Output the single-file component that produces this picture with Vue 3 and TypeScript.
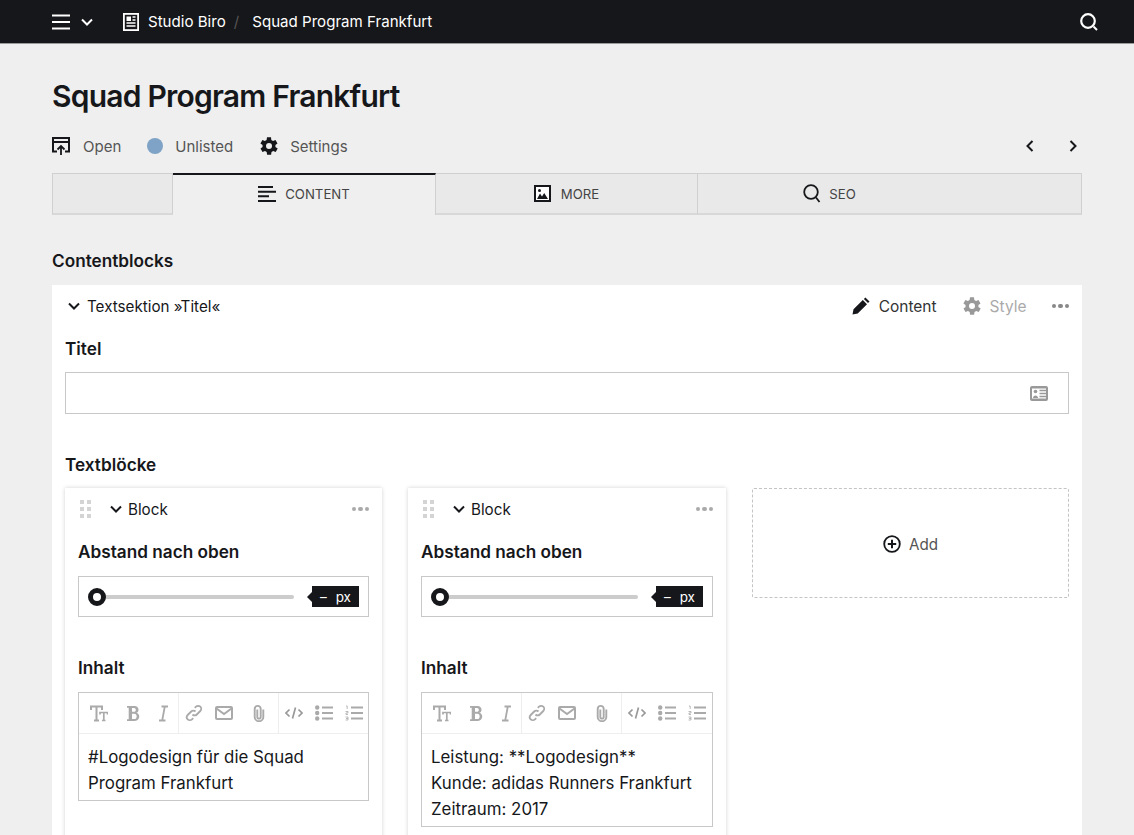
<script setup lang="ts">
interface Block { text: string[] }
const blocks: Block[] = [
  { text: ['#Logodesign für die Squad', 'Program Frankfurt'] },
  { text: ['Leistung: **Logodesign**', 'Kunde: adidas Runners Frankfurt', 'Zeitraum: 2017'] },
]
const gearPath = 'M19.4 13a7.5 7.5 0 0 0 0-2l2.1-1.6-2-3.5-2.5 1a7.6 7.6 0 0 0-1.7-1L15 3.200h-4l-.4 2.700a7.6 7.6 0 0 0-1.700 1l-2.500-1-2 3.500L6.600 11a7.5 7.5 0 0 0 0 2l-2.100 1.600 2 3.500 2.500-1c.5.4 1.100.7 1.700 1l.4 2.700h4l.4-2.700c.6-.3 1.200-.6 1.700-1l2.500 1 2-3.500zM13 15a3 3 0 1 1 0-6 3 3 0 0 1 0 6z'
</script>

<template>
  <div class="page">
    <header class="topbar">
      <div class="top-left">
        <svg class="burger" width="18" height="16" viewBox="0 0 18 16"><path d="M0 1.500h18M0 8h18M0 14.500h18" stroke="#fff" stroke-width="2" /></svg>
        <svg class="chev" width="12" height="8" viewBox="0 0 12 8"><path d="M1 1.500l5 5 5-5" fill="none" stroke="#fff" stroke-width="2" /></svg>
        <svg class="doc" width="16" height="18" viewBox="0 0 16 18">
          <rect x="0.900" y="0.900" width="14.200" height="16.200" fill="none" stroke="#fff" stroke-width="1.800" />
          <path d="M3.500 3.500h4.500v4.500h-4.500z" fill="#fff" />
          <path d="M9.500 4h3M9.500 7h3M3.500 10h9M3.500 13h9" stroke="#fff" stroke-width="1.300" />
        </svg>
        <span class="crumb">Studio Biro</span>
        <span class="slash">/</span>
        <span class="crumb">Squad Program Frankfurt</span>
      </div>
      <svg width="18" height="18" viewBox="0 0 18 18"><circle cx="8" cy="8" r="6.800" fill="none" stroke="#fff" stroke-width="2.200" /><path d="M13.500 13.500l3.500 3.500" stroke="#fff" stroke-width="2" /></svg>
    </header>

    <main class="main">
      <h1 class="title">Squad Program Frankfurt</h1>

      <div class="actions">
        <div class="action-list">
          <span class="action">
            <svg width="18" height="18" viewBox="0 0 18 18"><path d="M5 14.500H1V1h16v13.500h-4M1 5h16" fill="none" stroke="#16171a" stroke-width="2" /><path d="M9 18V9M5.500 12.500L9 9l3.500 3.500" fill="none" stroke="#16171a" stroke-width="1.800" /></svg>
            <span>Open</span>
          </span>
          <span class="action">
            <span class="dot"></span>
            <span>Unlisted</span>
          </span>
          <span class="action">
            <svg width="18" height="18" viewBox="4 3 18 18"><path :d="gearPath" fill="#16171a" fill-rule="evenodd" /></svg>
            <span>Settings</span>
          </span>
        </div>
        <div class="pager">
          <svg width="8" height="12" viewBox="0 0 8 12"><path d="M6.500 1L1.500 6l5 5" fill="none" stroke="#16171a" stroke-width="2" /></svg>
          <svg width="8" height="12" viewBox="0 0 8 12"><path d="M1.500 1l5 5-5 5" fill="none" stroke="#16171a" stroke-width="2" /></svg>
        </div>
      </div>

      <nav class="tabs">
        <div class="tab tab-empty"></div>
        <div class="tab tab-active">
          <svg width="18" height="16" viewBox="0 0 18 16"><path d="M0 1h15M0 5.700h18M0 10.300h11M0 15h18" stroke="#16171a" stroke-width="2" /></svg>
          <span>CONTENT</span>
        </div>
        <div class="tab tab-more">
          <svg width="17" height="17" viewBox="0 0 17 17"><rect x="1" y="1" width="15" height="15" fill="#fff" stroke="#16171a" stroke-width="2" /><path d="M3 14l3-5.500 2 3 2.200-3.500 3.800 6z" fill="#16171a" /><circle cx="5.500" cy="5.500" r="1.500" fill="#16171a" /></svg>
          <span>MORE</span>
        </div>
        <div class="tab tab-seo">
          <svg width="18" height="19" viewBox="0 0 18 19"><circle cx="8" cy="8" r="6.800" fill="none" stroke="#16171a" stroke-width="1.800" /><path d="M13 13.500l3.500 4.500" stroke="#16171a" stroke-width="1.800" /></svg>
          <span>SEO</span>
        </div>
      </nav>

      <h2 class="section-title">Contentblocks</h2>

      <section class="panel">
        <div class="panel-head">
          <div class="panel-name">
            <svg width="12" height="8" viewBox="0 0 12 8"><path d="M1 1.500l5 5 5-5" fill="none" stroke="#16171a" stroke-width="2" /></svg>
            <span>Textsektion »Titel«</span>
          </div>
          <div class="panel-tools">
            <span class="tool">
              <svg width="18" height="18" viewBox="0 0 18 18"><path d="M0.500 17.500l1-5.200L10.800 3l4.200 4.200-9.300 9.300zM11.900 1.900l1.500-1.400 4.100 4.100-1.500 1.500z" fill="#16171a" /></svg>
              <span>Content</span>
            </span>
            <span class="tool tool-muted">
              <svg width="18" height="18" viewBox="4 3 18 18"><path :d="gearPath" fill="#999" fill-rule="evenodd" /></svg>
              <span>Style</span>
            </span>
            <span class="dots dots-dark"><i></i><i></i><i></i></span>
          </div>
        </div>

        <label class="field-label label-titel">Titel</label>
        <div class="text-input">
          <svg width="18" height="15" viewBox="0 0 18 15"><rect width="18" height="15" rx="2" fill="#999" /><rect x="2" y="2.500" width="14" height="10" fill="#fff" /><circle cx="5.500" cy="5.500" r="1.800" fill="#999" /><path d="M3 12c0-3.500 5-3.500 5 0z" fill="#999" /><path d="M9.500 4.500H16M9.500 7.500H16M9.500 10.500H16" stroke="#999" stroke-width="1.500" /></svg>
        </div>

        <label class="field-label label-blocks">Textblöcke</label>

        <div class="grid">
          <article v-for="(block, i) in blocks" :key="i" class="card">
            <div class="card-head">
              <span class="grip"><i v-for="n in 6" :key="n"></i></span>
              <svg width="12" height="8" viewBox="0 0 12 8"><path d="M1 1.500l5 5 5-5" fill="none" stroke="#16171a" stroke-width="2" /></svg>
              <span class="card-name">Block</span>
              <span class="dots dots-card"><i></i><i></i><i></i></span>
            </div>

            <label class="field-label label-range">Abstand nach oben</label>
            <div class="range">
              <span class="knob"></span>
              <span class="track"></span>
              <span class="value"><span>–</span><span>px</span></span>
            </div>

            <label class="field-label label-inhalt">Inhalt</label>
            <div class="editor">
              <div class="toolbar">
                <div class="tb-group tb-a">
                  <svg width="18" height="17" viewBox="0 0 18 17"><path d="M1 5V1.500h11V5M6.500 1.500V15.500M4 15.500h5" fill="none" stroke="#aaa" stroke-width="2" /><path d="M10 9.500V7.500h7.500v2M13.800 7.500v8M12 15.500h3.500" fill="none" stroke="#aaa" stroke-width="1.700" /></svg>
                  <svg width="13" height="17" viewBox="0 0 13 17"><path d="M0 1h7.500c4.800 0 5.200 5.800 1.800 6.800 4.500 1 3.700 8.200-1.500 8.200H0v-1.800h1.700V2.800H0zM5 3v3.800h2c2.400 0 2.400-3.800 0-3.800zM5 8.800v5.200h2.400c3 0 3-5.200 0-5.200z" fill="#aaa" fill-rule="evenodd" /></svg>
                  <svg width="9" height="17" viewBox="0 0 9 17"><path d="M2.500 1.500H9M0 15.500h6.500M5.800 1.500L3.200 15.500" fill="none" stroke="#aaa" stroke-width="1.800" /></svg>
                </div>
                <div class="tb-group tb-b">
                  <svg width="18" height="18" viewBox="0 0 18 18"><path d="M7.500 10.500a3 3 0 0 0 4.300 0l3.500-3.500a3 3 0 0 0-4.300-4.300L9.800 3.900M10.500 7.500a3 3 0 0 0-4.300 0l-3.500 3.500a3 3 0 0 0 4.300 4.300l1.200-1.200" fill="none" stroke="#aaa" stroke-width="1.800" /></svg>
                  <svg width="18" height="14" viewBox="0 0 18 14"><rect x="1" y="1" width="16" height="12" rx="1" fill="none" stroke="#aaa" stroke-width="2" /><path d="M1.500 2.500L9 8l7.500-5.500" fill="none" stroke="#aaa" stroke-width="2" /></svg>
                  <svg class="clip" width="14" height="18" viewBox="0 0 14 18"><path d="M5.300 5v7.500a1.700 1.700 0 0 0 3.400 0V4.500a3 3 0 0 0-6 0v8a4.300 4.300 0 0 0 8.600 0V5" transform="translate(0 .4)" fill="none" stroke="#aaa" stroke-width="1.900" /></svg>
                </div>
                <div class="tb-group tb-c">
                  <svg width="18" height="12" viewBox="0 0 18 12"><path d="M4.500 2.500L1 6l3.500 3.500M13.500 2.500L17 6l-3.500 3.500M10.500 0.500L7.500 11.500" fill="none" stroke="#999" stroke-width="1.700" /></svg>
                  <svg width="18" height="16" viewBox="0 0 18 16"><circle cx="2.200" cy="2.500" r="2.200" fill="#aaa" /><circle cx="2.200" cy="8" r="2.200" fill="#aaa" /><circle cx="2.200" cy="13.500" r="2.200" fill="#aaa" /><path d="M7 2.500h11M7 8h11M7 13.500h11" stroke="#aaa" stroke-width="2" /></svg>
                  <svg width="18" height="16" viewBox="0 0 18 16"><path d="M6 2.500h12M6 8h12M6 13.500h12" stroke="#aaa" stroke-width="2" /><path d="M1 1h1.200v3M0.500 6.500h2.500v1.500H1v1.500h2M0.500 12h2.500v3H.5M1 13.500h2" fill="none" stroke="#aaa" stroke-width="0.800" /></svg>
                </div>
              </div>
              <div class="editor-body">
                <div v-for="line in block.text" :key="line">{{ line }}</div>
              </div>
            </div>
          </article>

          <div class="add">
            <svg width="18" height="18" viewBox="0 0 18 18"><circle cx="9" cy="9" r="7.800" fill="none" stroke="#16171a" stroke-width="1.800" /><path d="M9 4.800v8.400M4.800 9h8.400" stroke="#16171a" stroke-width="2" /></svg>
            <span>Add</span>
          </div>
        </div>
      </section>
    </main>
  </div>
</template>

<style>
html, body { margin: 0; overflow: hidden; background: #efefef; }
</style>

<style scoped>
.page {
  height: 835px;
  overflow: hidden;
  background: #efefef;
  color: #16171a;
  font-family: Inter, "Liberation Sans", sans-serif;
}
.topbar {
  height: 43px;
  border-bottom: 1px solid #999;
  margin-bottom: -1px;
  background: #16171a;
  color: #fff;
  padding: 0 36px 0 52px;
  display: flex;
  align-items: center;
  justify-content: space-between;
}
.top-left { display: flex; align-items: center; }
.burger { margin-right: 11px; }
.chev { margin-right: 30px; }
.doc { margin-right: 9px; }
.crumb { font-size: 15.100px; }
.slash { color: #555; font-size: 15.100px; margin: 0 13px 0 8px; }
.main { padding: 0 52px; }
.title {
  margin: 0;
  padding-top: 33px;
  font-size: 30px;
  line-height: 40px;
  font-weight: 600;
  letter-spacing: -0.780px;
}
.actions {
  margin-top: 18px;
  height: 24px;
  display: flex;
  align-items: center;
  justify-content: space-between;
}
.action-list { display: flex; gap: 26px; }
.action {
  display: flex;
  align-items: center;
  gap: 13px;
  font-size: 15px;
  color: #555;
}
.action:nth-child(2) { gap: 12px; }
.action:nth-child(3) { gap: 12px; margin-left: 1px; }
.dot { width: 16px; height: 16px; border-radius: 50%; background: #7ea3c6; }
.pager { display: flex; gap: 35px; padding-right: 5px; }
.tabs {
  margin-top: 15px;
  height: 42px;
  box-sizing: border-box;
  display: grid;
  grid-template-columns: 121px 263px 262px 1fr;
}
.tab {
  box-sizing: border-box;
  display: flex;
  align-items: center;
  justify-content: center;
  gap: 9px;
  font-size: 13.200px;
  color: #444;
  background: #e9e9e9;
  border: 1px solid #d0d0d0;
  border-bottom: 2px solid #d8d8d8;
  border-left-width: 0;
}
.tab-empty { border-left-width: 1px; }
.tab-active {
  background: #efefef;
  border-top: 2px solid #16171a;
  border-bottom: 0;
  padding-bottom: 2px;
}
.tab-more { gap: 10px; }
.tab-seo { padding-right: 120px; gap: 8px; }
.section-title {
  margin: 0;
  padding-top: 35px;
  font-size: 17.200px;
  line-height: 22px;
  font-weight: 600;
}
.panel {
  margin-top: 13px;
  background: #fff;
  padding: 0 13px;
  height: 560px;
}
.panel-head {
  height: 42px;
  display: flex;
  align-items: center;
  justify-content: space-between;
}
.panel-name {
  display: flex;
  align-items: center;
  gap: 7px;
  font-size: 15.200px;
  padding-left: 3px;
}
.panel-tools { display: flex; align-items: center; }
.tool {
  display: flex;
  align-items: center;
  gap: 9px;
  font-size: 15.500px;
  font-weight: 400;
  color: #333;
  margin-right: 26px;
}
.tool-muted { color: #aaa; margin-right: 25px; }
.dots { display: inline-flex; gap: 2px; }
.dots i { width: 4.500px; height: 4.500px; border-radius: 50%; background: #888; }
.field-label {
  display: block;
  font-size: 17.200px;
  font-weight: 600;
  line-height: 22px;
}
.label-titel { margin-top: 11px; }
.text-input {
  margin-top: 12px;
  height: 42px;
  box-sizing: border-box;
  border: 1px solid #c8c8c8;
  display: flex;
  align-items: center;
  justify-content: flex-end;
  padding-right: 20px;
}
.label-blocks { margin-top: 40px; }
.grid {
  margin-top: 12px;
  display: grid;
  grid-template-columns: 317px 318px 317px;
  column-gap: 26px;
  align-items: start;
}
.card {
  background: #fff;
  box-shadow: 0 0 4px rgba(0, 0, 0, 0.180);
  padding: 0 13px;
  height: 380px;
  box-sizing: border-box;
}
.card-head {
  height: 42px;
  display: flex;
  align-items: center;
}
.card-name { font-size: 15.200px; margin-left: 6px; }
.grip {
  display: grid;
  grid-template-columns: 4px 4px;
  gap: 3px;
  margin: 0 19px 0 2px;
}
.grip i { width: 4px; height: 4px; background: #d4d4d4; }
.dots-card { margin-left: auto; }
.dots-card i { background: #aaa; }
.label-range { margin-top: 11px; }
.range {
  margin-top: 13px;
  height: 41px;
  box-sizing: border-box;
  border: 1px solid #c8c8c8;
  display: flex;
  align-items: center;
  padding: 0 9px;
}
.knob {
  width: 18px;
  height: 18px;
  box-sizing: border-box;
  border-radius: 50%;
  background: #fff;
  border: 5px solid #16171a;
  flex: none;
  z-index: 1;
}
.track { height: 4px; background: #ccc; border-radius: 2px; flex: 1; margin-left: -2px; }
.value {
  position: relative;
  margin-left: 18px;
  width: 47px;
  height: 21px;
  box-sizing: border-box;
  background: #16171a;
  color: #fff;
  font-size: 13.500px;
  display: flex;
  align-items: center;
  justify-content: space-between;
  padding: 0 8px;
}
.value::before {
  content: "";
  position: absolute;
  left: -5px;
  top: 6px;
  border-top: 5px solid transparent;
  border-bottom: 5px solid transparent;
  border-right: 5px solid #16171a;
}
.label-inhalt { margin-top: 40px; }
.editor {
  margin-top: 13px;
  border: 1px solid #c8c8c8;
}
.toolbar {
  height: 41px;
  border-bottom: 1px solid #eee;
  box-sizing: border-box;
  display: flex;
  align-items: center;
}
.tb-group {
  height: 100%;
  display: flex;
  align-items: center;
  box-sizing: border-box;
}
.tb-a { width: 99px; gap: 19px; padding-left: 11px; }
.tb-b { width: 100px; gap: 12px; padding-left: 6px; border-left: 1px solid #eee; }
.clip { margin-left: 7px; }
.tb-c { flex: 1; gap: 12px; padding-left: 6px; border-left: 1px solid #eee; }
.editor-body {
  padding: 10px 9px 4px;
  font-size: 16.850px;
  line-height: 26px;
}
.add {
  height: 110px;
  box-sizing: border-box;
  border: 1px dashed #c4c4c4;
  border-radius: 2px;
  display: flex;
  align-items: center;
  justify-content: center;
  gap: 8px;
  padding-top: 2px;
  font-size: 15.200px;
  color: #555;
}
</style>
